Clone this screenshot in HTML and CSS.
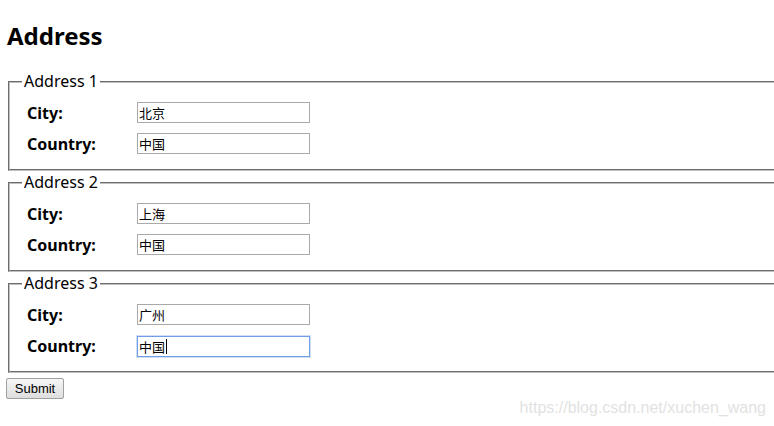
FILE: index.html
```html
<!DOCTYPE html>
<html lang="zh">
<head>
<meta charset="utf-8">
<title>Address</title>
<link rel="stylesheet" href="styles.css">
</head>
<body>
<div class="page">
  <h1 class="title">Address</h1>
  <form class="form">
    <fieldset class="group">
      <legend class="group-legend">Address 1</legend>
      <div class="row"><span class="label">City:</span><input class="field" type="text" value="北京"></div>
      <div class="row"><span class="label">Country:</span><input class="field" type="text" value="中国"></div>
    </fieldset>
    <fieldset class="group">
      <legend class="group-legend">Address 2</legend>
      <div class="row"><span class="label">City:</span><input class="field" type="text" value="上海"></div>
      <div class="row"><span class="label">Country:</span><input class="field" type="text" value="中国"></div>
    </fieldset>
    <fieldset class="group">
      <legend class="group-legend">Address 3</legend>
      <div class="row"><span class="label">City:</span><input class="field" type="text" value="广州"></div>
      <div class="row"><span class="label">Country:</span><span class="field-wrap"><input class="field field-focus" type="text" value="中国"><span class="caret"></span></span></div>
    </fieldset>
    <button class="submit" type="button">Submit</button>
  </form>
</div>
<div class="watermark">https://blog.csdn.net/xuchen_wang</div>
</body>
</html>
```
FILE: styles.css
```css
html {
  overflow: hidden;
}
body {
  margin: 0;
  font-family: "Noto Sans", "Open Sans", sans-serif;
  color: #000;
  background: #fff;
}
.page {
  padding: 0 0 0 6px;
}
.title {
  font-size: 24px;
  line-height: 32px;
  font-weight: 700;
  margin: 20px 0 19px 1px;
}
.form {
  margin: 0;
}
.group {
  margin: 0 0 1px 2px;
  width: calc(100% + 60px);
  border: 2px groove #c0c0c0;
  padding: 10px 12px 15px 12px;
  box-sizing: border-box;
}
.group-legend {
  font-size: 16px;
  line-height: 21px;
  padding: 0 2px;
}
.row {
  display: flex;
  align-items: center;
  height: 21px;
  padding-left: 5px;
}
.row + .row {
  margin-top: 10px;
}
.label {
  width: 110px;
  font-size: 16px;
  font-weight: 700;
}
.field {
  width: 173px;
  height: 21px;
  box-sizing: border-box;
  border: 1px solid #a9a9a9;
  padding: 0 1px;
  margin: 0;
  font-family: "Noto Sans CJK SC", sans-serif;
  font-size: 13px;
  color: #000;
  outline: none;
}
.field-wrap {
  position: relative;
  display: inline-block;
  height: 21px;
}
.field-focus {
  border: 1px solid #6f9de6;
  box-shadow: 0 0 0 1px rgba(120, 160, 230, 0.35);
}
.caret {
  position: absolute;
  left: 29px;
  top: 4px;
  width: 1px;
  height: 15px;
  background: #000;
}
.submit {
  display: block;
  margin: 5px 0 0 0;
  width: 58px;
  height: 21px;
  padding: 0;
  font-family: "Liberation Sans", Arial, sans-serif;
  font-size: 13px;
  color: #000;
  background: linear-gradient(#f6f6f6, #dedede);
  border: 1px solid #a0a0a0;
  border-radius: 2px;
}
.watermark {
  position: absolute;
  right: 8px;
  bottom: 9px;
  font-family: "Liberation Sans", Arial, sans-serif;
  font-size: 16px;
  color: #e2e2e2;
}
```
